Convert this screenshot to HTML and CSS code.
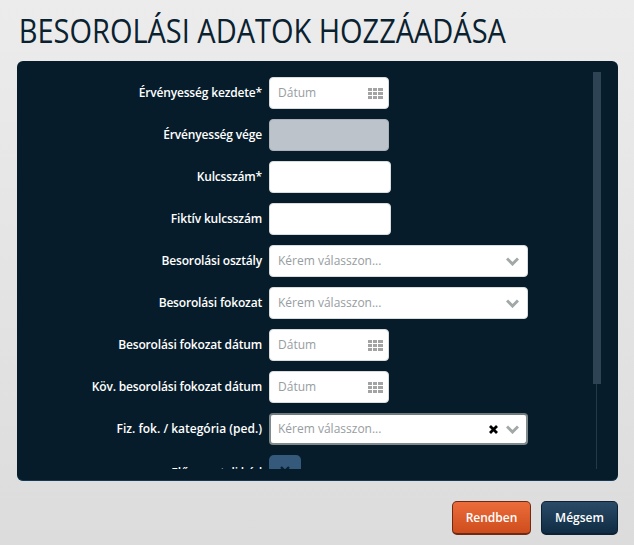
FILE: index.html
```html
<!DOCTYPE html>
<html lang="hu">
<head>
    <meta charset="UTF-8">
    <title>Besorolási adatok hozzáadása</title>
    <link rel="stylesheet" href="styles.css">
</head>
<body>
    <h1 class="title">BESOROLÁSI ADATOK HOZZÁADÁSA</h1>
    <div class="panel">
        <div class="form-scroll">
            <div class="form-row">
                <label>Érvényesség kezdete*</label>
                <div class="field field-date"><span class="placeholder">Dátum</span>
                    <svg class="cal" width="15" height="11" viewBox="0 0 15 11"><path fill="#a3a3a3" d="M0 0h4v3H0zM5 0h4v3H5zM10 0h5v3h-5zM0 4h4v3H0zM5 4h4v3H5zM10 4h5v3h-5zM0 8h4v3H0zM5 8h4v3H5zM10 8h5v3h-5z"/></svg>
                </div>
            </div>
            <div class="form-row">
                <label>Érvényesség vége</label>
                <div class="field field-date field-disabled"></div>
            </div>
            <div class="form-row">
                <label>Kulcsszám*</label>
                <div class="field field-text"></div>
            </div>
            <div class="form-row">
                <label>Fiktív kulcsszám</label>
                <div class="field field-text"></div>
            </div>
            <div class="form-row">
                <label>Besorolási osztály</label>
                <div class="field field-select"><span class="placeholder">Kérem válasszon...</span>
                    <svg class="chevron" width="13" height="9" viewBox="0 0 13 9"><path fill="none" stroke="#a2a8a8" stroke-width="3" d="M1 1.5l5.5 5.5 5.5-5.5"/></svg>
                </div>
            </div>
            <div class="form-row">
                <label>Besorolási fokozat</label>
                <div class="field field-select"><span class="placeholder">Kérem válasszon...</span>
                    <svg class="chevron" width="13" height="9" viewBox="0 0 13 9"><path fill="none" stroke="#a2a8a8" stroke-width="3" d="M1 1.5l5.5 5.5 5.5-5.5"/></svg>
                </div>
            </div>
            <div class="form-row">
                <label>Besorolási fokozat dátum</label>
                <div class="field field-date"><span class="placeholder">Dátum</span>
                    <svg class="cal" width="15" height="11" viewBox="0 0 15 11"><path fill="#a3a3a3" d="M0 0h4v3H0zM5 0h4v3H5zM10 0h5v3h-5zM0 4h4v3H0zM5 4h4v3H5zM10 4h5v3h-5zM0 8h4v3H0zM5 8h4v3H5zM10 8h5v3h-5z"/></svg>
                </div>
            </div>
            <div class="form-row">
                <label>Köv. besorolási fokozat dátum</label>
                <div class="field field-date"><span class="placeholder">Dátum</span>
                    <svg class="cal" width="15" height="11" viewBox="0 0 15 11"><path fill="#a3a3a3" d="M0 0h4v3H0zM5 0h4v3H5zM10 0h5v3h-5zM0 4h4v3H0zM5 4h4v3H5zM10 4h5v3h-5zM0 8h4v3H0zM5 8h4v3H5zM10 8h5v3h-5z"/></svg>
                </div>
            </div>
            <div class="form-row">
                <label class="label-wide">Fiz. fok. / kategória (ped.)</label>
                <div class="field field-select field-active"><span class="placeholder">Kérem válasszon...</span>
                    <svg class="clear" width="9" height="9" viewBox="0 0 9 9"><path fill="none" stroke="#000" stroke-width="2.8" d="M1 1l7 7M8 1L1 8"/></svg>
                    <svg class="chevron" width="13" height="9" viewBox="0 0 13 9"><path fill="none" stroke="#a2a8a8" stroke-width="3" d="M1 1.5l5.5 5.5 5.5-5.5"/></svg>
                </div>
            </div>
            <div class="form-row form-row-toggle">
                <label>Előmeneteli kód</label>
                <div class="toggle">
                    <svg width="10" height="10" viewBox="0 0 10 10"><path fill="none" stroke="#0a2233" stroke-width="2.4" d="M1 1l8 8M9 1L1 9"/></svg>
                </div>
            </div>
        </div>
        <div class="scrollbar"><div class="scrollbar-thumb"></div></div>
    </div>
    <div class="actions">
        <button class="btn btn-ok">Rendben</button>
        <button class="btn btn-cancel">Mégsem</button>
    </div>
</body>
</html>
```

FILE: styles.css
```css
body {
    margin: 0;
    padding: 0 16px 0 17px;
    box-sizing: border-box;
    height: 545px;
    overflow: hidden;
    font-family: "Open Sans", "Noto Sans", sans-serif;
    background: linear-gradient(to bottom, #ececec, #dcdcdc);
}
.title {
    margin: 0;
    padding: 11px 0 0 2px;
    height: 61px;
    box-sizing: border-box;
    font-size: 32px;
    line-height: 40px;
    font-weight: 400;
    color: #0a2130;
    white-space: nowrap;
    transform: scaleX(0.905);
    transform-origin: left center;
}
.panel {
    position: relative;
    height: 420px;
    background-color: #061c2a;
    border-radius: 6px;
    border-bottom: 1px solid #123a58;
    box-sizing: border-box;
    padding-top: 16px;
}
.form-scroll {
    height: 392px;
    overflow: hidden;
}
.form-row {
    display: flex;
    align-items: center;
    height: 32px;
    margin-bottom: 10px;
}
.form-row label {
    width: 245px;
    margin-right: 7px;
    padding-bottom: 2px;
    text-align: right;
    font-size: 12px;
    font-weight: 600;
    letter-spacing: -0.17px;
    color: #fff;
    white-space: nowrap;
}
.form-row label.label-wide {
    letter-spacing: 0;
}
.form-row-toggle label {
    padding-bottom: 0;
    margin-top: 3px;
}
.field {
    display: flex;
    align-items: center;
    box-sizing: border-box;
    height: 32px;
    padding: 0 8px;
    background-color: #fff;
    border-radius: 4px;
    border: 1px solid #d8dcdc;
}
.field-date {
    width: 120px;
    padding-right: 5px;
}
.field-text {
    width: 122px;
}
.field-select {
    width: 259px;
}
.field-disabled {
    background-color: #bcc3ca;
    border-color: #aab0b5;
}
.field-active {
    border: 2px solid #7e8a8c;
    border-top-color: #6f7b7d;
    padding: 0 7px;
}
.placeholder {
    flex: 1;
    padding-bottom: 2px;
    font-size: 12px;
    color: #979d9f;
}
.clear {
    margin-right: 8px;
}
.toggle {
    display: flex;
    align-items: center;
    justify-content: center;
    width: 32px;
    height: 32px;
    margin-top: -1px;
    border-radius: 5px;
    background-color: #35597a;
}
.scrollbar {
    position: absolute;
    top: 11px;
    right: 17px;
    bottom: 11px;
    width: 8px;
}
.scrollbar::before {
    content: "";
    position: absolute;
    top: 0;
    bottom: 0;
    left: 3px;
    width: 1px;
    background-color: #22394a;
}
.scrollbar-thumb {
    position: relative;
    height: 312px;
    background-color: #2e4353;
}
.actions {
    display: flex;
    justify-content: flex-end;
    gap: 10px;
    padding-top: 20px;
}
.btn {
    height: 34px;
    padding: 0;
    box-sizing: border-box;
    border-radius: 5px;
    font-family: "Open Sans", "Noto Sans", sans-serif;
    font-size: 12px;
    font-weight: 600;
    color: #fff;
}
.btn-ok {
    width: 79px;
    border: 1px solid #6e2a12;
    border-bottom-width: 2px;
    background: linear-gradient(to bottom, #ec6c3c, #cf4d1c);
}
.btn-cancel {
    width: 77px;
    border: 1px solid #0c2133;
    border-bottom-width: 2px;
    background: linear-gradient(to bottom, #2a4a66, #102c44);
}
```
